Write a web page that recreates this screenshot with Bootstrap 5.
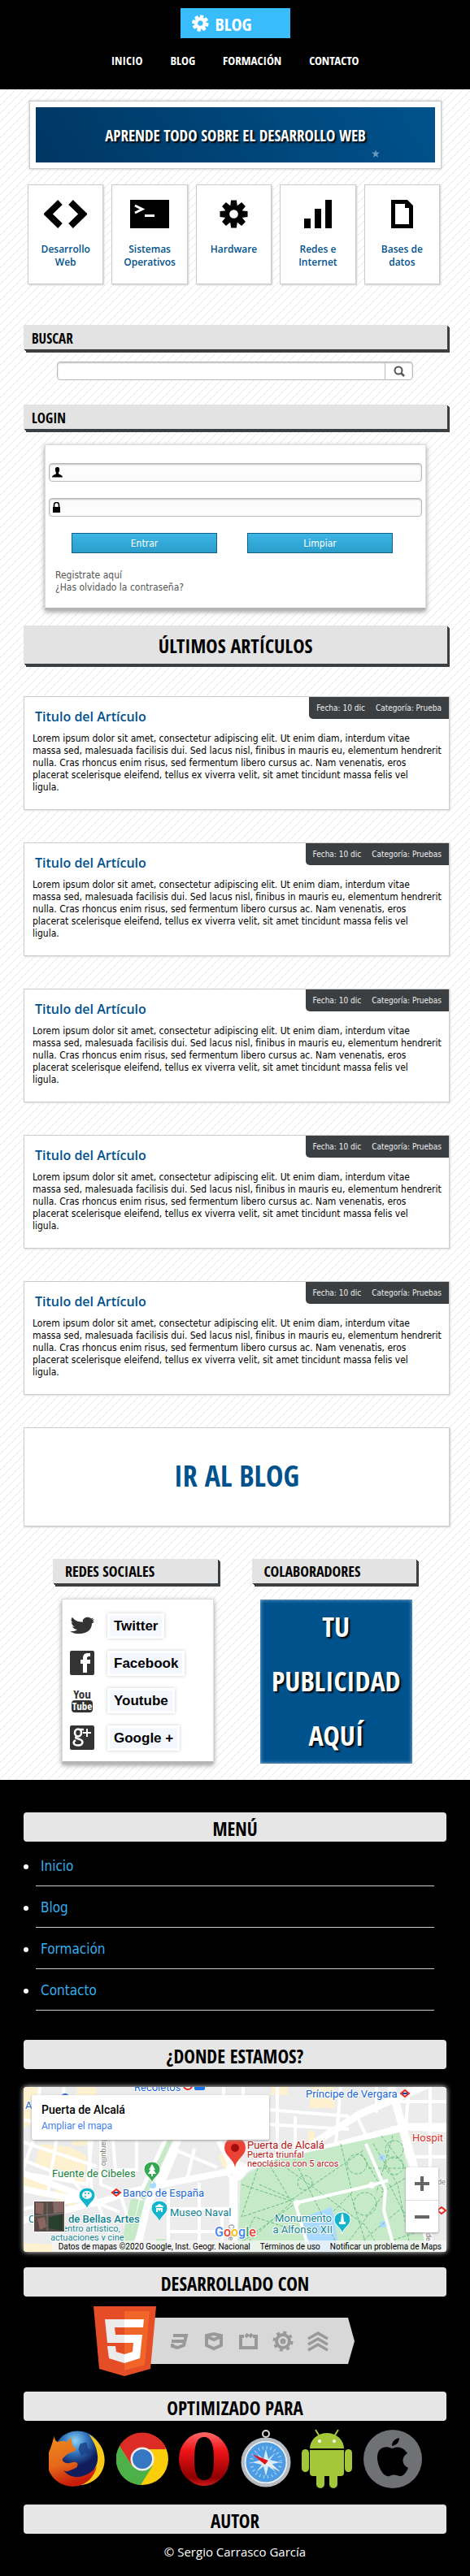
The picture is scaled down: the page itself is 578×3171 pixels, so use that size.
<!DOCTYPE html>
<html lang="es">
<head>
<meta charset="utf-8">
<meta name="viewport" content="width=device-width, initial-scale=1">
<title>Blog</title>
<link href="https://cdn.jsdelivr.net/npm/bootstrap@5.3.0/dist/css/bootstrap.min.css" rel="stylesheet">
<style>
:root{--ink:#3b3f42;--brand:#00528d;--sky:#39bcfc;--line:#ccc}
body{font-family:"DejaVu Sans Condensed","Open Sans",sans-serif;font-size:12px;line-height:15px;color:#000;
 background:#fff linear-gradient(to bottom right,transparent 45%,#e6e6e6 50%,transparent 55%) 0 0/10px 10px}
a{text-decoration:none}
.display-face{font-family:"Open Sans Condensed","Roboto Condensed","Liberation Sans Narrow",sans-serif;text-transform:uppercase;font-weight:700}
.site-head{background:#000;height:110px;padding-top:10px}
.logo{background:var(--sky);color:#fff;width:135px;height:37px;padding-left:14px;font-size:22px;line-height:38px}
.site-nav{gap:34px;margin-top:16px}
.site-nav a{color:#fff;font-size:15px;line-height:22px}
.page{padding:14px 25px 0 29px}
.hero{margin:0 10px 0 7px;padding:7px;background:#fff;border:1px solid var(--line);box-shadow:0 0 3px #bbb}
.hero h1{margin:0;height:68px;line-height:70px;font-size:19px;color:#fff;text-align:center;text-shadow:2px 2px 2px #000;background:linear-gradient(60deg,#003763,#00528d)}
.hero svg{position:absolute;right:74px;bottom:12px}
.topics{margin:19px 12px 50px 5px;gap:10px}
.topic{flex:1 1 0;height:123px;background:#fff;border:1px solid var(--line);box-shadow:1px 1px 2px #ccc;padding-top:18px;color:var(--brand);font:600 12px/16px "Open Sans",sans-serif;text-align:center}
.topic svg{display:block;margin:0 auto 18px}
.bar{background:#e3e3e3 radial-gradient(#c9c9c9 35%,transparent 45%) 0 0/2px 2px;margin:0 3px 0 0;color:#000;box-shadow:1px 1px var(--ink),2px 2px var(--ink),3px 3px var(--ink),3px 4px var(--ink)}
.bar-sm{height:30px;line-height:34px;font-size:17px;padding-left:10px}
.bar-lg{height:47px;line-height:50px;font-size:24px;text-align:center;margin:19px 3px 40px 0}
.field{border:1px solid #bbb;border-radius:4px;background:#fcfcfc;height:23px;box-shadow:inset 0 1px 2px #bbb}
.field input{border:0;background:none;outline:0;min-width:0}
.search{margin:15px 45px 30px 41px;background:#fff}
.search button{width:34px;border:0;border-left:1px solid #bbb;background:none;padding:0}
.panel{background:#fff;border:1px solid #ddd;border-bottom:3px solid #b5b5b5;box-shadow:0 2px 6px #999}
.login{margin:19px 29px 0 26px;padding:22px 4px 17px;height:204px}
.login .field{padding-left:3px}
.login .field+.field{margin-top:20px}
.actions{gap:37px;margin:20px 36px 20px 28px}
.cta{height:25px;padding:0;border:1px solid #0f6188;border-radius:0;background:linear-gradient(#3cb5e5,#2b9dcb);color:#fff;font-size:12px;flex:1}
.login a{color:#555}
.post{background:#fff;border:1px solid var(--line);box-shadow:1px 1px 2px #ddd;height:140px;margin-bottom:40px;padding:14px 5px 0 10px}
.post h3{margin:0 0 10px;padding-left:3px;font:600 16px/20px "Open Sans",sans-serif}
.post h3 a{color:var(--brand)}
.post p{margin:0}
.post-meta{position:absolute;top:0;right:0;background:var(--ink);color:#eee;height:27px;line-height:28px;font-size:10px;padding:0 9px;border-bottom-left-radius:5px;display:flex;gap:13px}
.to-blog{height:122px;background:#fff;border:1px solid var(--line);box-shadow:1px 1px 2px #ccc;color:var(--brand);font-size:36px;line-height:118px}
.duo{margin:40px 38px 0 36px;gap:39px}
.duo section{flex:1 1 0;min-width:0}
.duo .bar-sm{padding-left:15px;line-height:30px;font-size:18px}
.social{margin:19px 8px 0 11px;padding:9px 9px 0;height:203px}
.social a{display:flex;align-items:center;height:46px;gap:16px;color:#000}
.social span{font:700 17px/25px "Liberation Sans",Arial,sans-serif;background:#f5f7ff;border:3px solid #fff;box-shadow:0 0 4px #ccc;padding:0 5px}
.ad{margin:20px 8px 0 10px;height:202px;background:var(--brand);color:#fff;font-size:34px;line-height:67px;text-align:center;text-shadow:2px 2px 2px #000;box-shadow:inset 0 0 5px #9cc3e4}
.site-foot{background:#000;margin-top:20px;padding:40px 29px 20px;color:#fff}
.foot-bar{background:#e6e6e6 radial-gradient(#c9c9c9 35%,transparent 45%) 0 0/2px 2px;border-radius:4px;height:36px;line-height:40px;font-size:23px;color:#000;text-align:center;margin:0}
.foot-menu{margin:4px 15px 36px;padding:0;list-style:none}
.foot-menu li{position:relative;border-bottom:1px solid #ccc;height:51px;line-height:52px;padding-left:6px;font-size:17px}
.foot-menu li::before{content:"";position:absolute;left:-15px;top:24px;width:6px;height:6px;border-radius:50%;background:#fff}
.foot-menu a{color:#35aeeb}
.map{margin:22px 0 19px;height:203px;border-radius:4px;overflow:hidden;box-shadow:0 0 6px #fff;background:#ececec;font-family:Roboto,"Liberation Sans",sans-serif}
.map>svg{display:block}
.map-card{position:absolute;left:10px;top:10px;width:292px;height:55px;background:#fff;border-radius:2px;box-shadow:0 1px 3px #999;padding:10px 12px}
.map-card strong{display:block;font-size:14px;font-weight:500;line-height:16px}
.map-card a{display:block;margin-top:4px;font-size:12px;line-height:16px;color:#427fed}
.map-zoom{position:absolute;right:10px;bottom:24px;width:40px;background:#fff;border-radius:2px;box-shadow:0 1px 3px #999}
.map-zoom button{display:block;width:40px;height:40px;border:0;background:none;padding:0}
.map-zoom button+button{border-top:1px solid #ddd}
.map-legal{position:absolute;right:0;bottom:0;height:14px;line-height:16px;font-size:10px;background:rgba(245,245,245,.75);padding:0 6px 0 8px;gap:12px;color:#000;white-space:nowrap}
.map-legal a{color:#000}
.made{margin:12px 0 19px}
.browsers{margin:10px 30px 19px 31px}
.author{margin:12px 0 0;font:15px/20px "Open Sans",sans-serif}
</style>
</head>
<body>
<svg width="0" height="0" class="position-absolute" aria-hidden="true">
 <symbol id="gear" viewBox="-18 -18 36 36"><g fill="currentColor"><path id="t" d="M-3.500-17.500h7l1 8h-9zM-3.500 17.500h7l1-8h-9z"/><use href="#t" transform="rotate(45)"/><use href="#t" transform="rotate(90)"/><use href="#t" transform="rotate(135)"/></g><circle r="8.500" fill="none" stroke="currentColor" stroke-width="6"/></symbol>
</svg>

<header class="site-head d-flex flex-column align-items-center">
 <a href="#" class="logo display-face d-flex gap-2"><svg width="21" height="21" class="mt-2"><use href="#gear" transform="rotate(12 10 10)"/></svg>Blog</a>
 <nav class="site-nav d-flex display-face"><a href="#">Inicio</a><a href="#">Blog</a><a href="#">Formación</a><a href="#">Contacto</a></nav>
</header>

<main class="page">
 <section class="hero position-relative"><h1 class="display-face">Aprende todo sobre el desarrollo web</h1>
  <svg width="12" height="12" viewBox="0 0 12 12"><path d="M6 1l1 3.500 4 .2-3 2.300 1 4-3-2.300L3 11l1-4L1 4.700l4-.2z" fill="#8fb2d0" opacity=".75"/></svg></section>

 <section class="topics d-flex">
  <a href="#" class="topic"><svg width="53" height="35" viewBox="0 0 53 35"><path d="M20 3L5 17.500 20 32M33 3l15 14.500L33 32" fill="none" stroke="#000" stroke-width="8"/></svg>Desarrollo<br>Web</a>
  <a href="#" class="topic"><svg width="48" height="35" viewBox="0 0 48 35"><path d="M0 0h48v35H0z"/><path d="M6 7l9 4.500L6 16M18 19.500h12" fill="none" stroke="#fff" stroke-width="3"/></svg>Sistemas<br>Operativos</a>
  <a href="#" class="topic"><svg width="35" height="35" class="text-black"><use href="#gear"/></svg>Hardware</a>
  <a href="#" class="topic"><svg width="35" height="35" viewBox="0 0 35 35"><path d="M1 23h8v12H1zM14 11h8v24h-8zM27 0h8v35h-8z"/></svg>Redes e<br>Internet</a>
  <a href="#" class="topic"><svg width="27" height="35" viewBox="0 0 27 35"><path fill-rule="evenodd" d="M0 0h20l7 7v28H0zM5 5v25h17V10h-5V5z"/></svg>Bases de<br>datos</a>
 </section>

 <h2 class="bar bar-sm display-face">Buscar</h2>
 <form class="search field d-flex">
  <input type="search" class="flex-grow-1" aria-label="Buscar">
  <button type="button" aria-label="Buscar"><svg width="14" height="14" viewBox="0 0 14 14" fill="none" stroke="#555"><circle cx="6" cy="6" r="4.500" stroke-width="2"/><path d="M9 9l4 4" stroke-width="2.500"/></svg></button>
 </form>

 <h2 class="bar bar-sm display-face">Login</h2>
 <form class="login panel">
  <div class="field d-flex align-items-center"><svg width="13" height="13" viewBox="0 0 13 13"><path d="M6.500 0C9 0 9.500 2 9 4.500 8.600 6 8 6.500 8 8c0 1 5 1.500 5 4.500H0C0 9.500 5 9 5 8c0-1.500-.6-2-1-3.500C3.500 2 4 0 6.500 0z"/></svg><input type="text" class="flex-grow-1" aria-label="Usuario"></div>
  <div class="field d-flex align-items-center"><svg width="11" height="13" viewBox="0 0 11 13"><path d="M1 6h9v7H1z"/><path d="M2.500 6V3.500a3 3 0 016 0V6" fill="none" stroke="#000" stroke-width="1.600"/></svg><input type="password" class="flex-grow-1" aria-label="Contraseña"></div>
  <div class="actions d-flex"><button type="button" class="btn cta">Entrar</button><button type="button" class="btn cta">Limpiar</button></div>
  <div class="ms-2"><a href="#">Registrate aquí</a><br><a href="#">¿Has olvidado la contraseña?</a></div>
 </form>

 <h2 class="bar bar-lg display-face">Últimos artículos</h2>
 <div id="posts"></div>
 <a href="#" class="to-blog display-face d-block text-center">Ir al blog</a>

 <div class="duo d-flex">
  <section><h2 class="bar bar-sm display-face">Redes sociales</h2>
   <div class="social panel">
    <a href="#"><svg width="30" height="30" viewBox="0 0 30 30"><path fill="#333" d="M30 9l-3 2c0 9-6 15-15 15-5 0-9-1-12-4 4 1 7 0 9-2-3 0-5-2-6-4h3C3 14 2 12 2 9l2 1C1 8 1 5 3 2c3 5 7 7 13 7-1-4 2-7 6-7 2 0 3 1 4 2l3-1-2 3 3-1-2 3z" transform="translate(0 3) scale(1 .85)"/></svg><span>Twitter</span></a>
    <a href="#"><svg width="30" height="30" viewBox="0 0 30 30"><rect width="30" height="30" rx="2" fill="#333"/><path fill="#fff" d="M16 27V16h-3v-5h3V9c0-4 2-6 6-6h3v4h-2c-1 0-2 1-2 2v2h4v5h-4v11z"/></svg><span>Facebook</span></a>
    <a href="#"><svg width="30" height="30" viewBox="0 0 30 30" overflow="visible" font-family="Open Sans Condensed,Roboto Condensed" font-weight="700" text-anchor="middle"><text x="15" y="13" font-size="15" fill="#333">You</text><rect x="2" y="15" width="26" height="15" rx="4" fill="#333"/><text x="15" y="27" font-size="13" fill="#fff">Tube</text></svg><span>Youtube</span></a>
    <a href="#"><svg width="30" height="30" viewBox="0 0 30 30"><rect width="30" height="30" rx="2" fill="#333"/><g fill="none" stroke="#fff"><ellipse cx="10" cy="9" rx="4" ry="4.500" stroke-width="2.600"/><path d="M12 5h5M9 13c-5 3 1 3 4 4.500 4 2 3 7-3 7s-7-4-3-6.500" stroke-width="2.400"/><path d="M21 4v10M16 9h10" stroke-width="2"/></g></svg><span>Google +</span></a>
   </div></section>
  <section><h2 class="bar bar-sm display-face">Colaboradores</h2>
   <div class="ad display-face">Tu<br>publicidad<br>aquí</div></section>
 </div>
</main>

<footer class="site-foot">
 <h2 class="foot-bar display-face">Menú</h2>
 <ul class="foot-menu"><li><a href="#">Inicio</a></li><li><a href="#">Blog</a></li><li><a href="#">Formación</a></li><li><a href="#">Contacto</a></li></ul>

 <h2 class="foot-bar display-face">¿Donde estamos?</h2>
 <div class="map position-relative">
  <svg width="100%" height="203" viewBox="0 0 520 203" preserveAspectRatio="xMidYMid slice">
   <rect width="520" height="203" fill="#ececec"/>
   <g fill="#fef1cf"><path d="M0 0h20l6 40-26 10zM66 0h24l-4 30-24 5zM20 70l40 4-4 30-42-8zM60 75l18 10-4 34-24-8zM0 110l30 12-6 14-24-8zM38 124l26 8v18l-26-12zM252 70h18l-4 26-20 4-6-14zM355 0h28v26h-32zM305 0h20v10h-20zM350 54h8v18h-8zM0 192l40 2v9H0zM60 60h18v12H60z"/></g>
   <g fill="none" stroke="#fff" stroke-width="4"><path d="M0 40l80 20 4 74M0 68l90 30M20 0L14 60-4 110M50 0L38 80 30 130M84 66l-6 54-78-14M0 90l60 24 24 30M95 66v54l24 10M110 66l3 36h26V66M180 75l58 24M200 118l10-42M170 122l20-46M0 150l90-14M78 138l40 16M90 140l16 40M118 130l20 60M178 125v78M178 150h84M216 118v86M244 150v53M178 178h80M246 0v66M270 0v12M300 28l100 8M300 46l100 6M312 0v80M334 36v44M390 0l-6 70M410 36l14 30M450 18h70M452 50l68 4M474 0l-8 100M500 0v120M470 86h50M500 120v83M434 0v32"/></g>
   <g fill="none" stroke="#fff"><path d="M-4 105l90 34M-4 125l94 18M-4 165l100-24 34-12 46-10 72-14 24-8" stroke-width="8"/><path d="M178 60l-34 72-18 71" stroke-width="7"/><path d="M192 60l-40 86-14 60" stroke-width="9"/><path d="M258 110v93" stroke-width="10"/><path d="M262 108l18-12 90-20 100-27h54" stroke-width="9"/><path d="M348 75l66-42L500-4" stroke-width="9"/><path d="M452 0l28 98 16 110" stroke-width="10"/><path d="M240 66l22 44" stroke-width="7"/><circle cx="261" cy="103" r="10" stroke-width="5"/></g>
   <path d="M180 66l-34 72M146 140l-16 63" stroke="#c6e9c8" stroke-width="6"/>
   <path d="M132 138h10l-14 65h-10zM163 187h12v16h-12z" fill="#c6e9c8"/>
   <path d="M278 105l32-16 152-33 10 42 24 105H263l4-88z" fill="#c6e9c8"/>
   <path d="M346 160l32-12 4 12 6 43h-38l-8-26z" fill="#aadaff"/><circle cx="441" cy="87" r="4" fill="#aadaff"/><circle cx="442" cy="169" r="4" fill="#aadaff"/><circle cx="159" cy="121" r="4" fill="#aadaff"/>
   <g fill="none" stroke="#69bd80" stroke-width="1" stroke-dasharray="4 2"><path d="M268 120l60 20 90-62M270 190l66-48 100-22M288 100l-20 60 60-20M300 92l30 50-60 54M290 120l44 20M310 90l110 80 20 33M330 84l60 119M390 70l14 60-24 24M264 200l20-40 60 20M400 125l24 78M400 190l44-60-30-50M440 60l30 40M430 70l30 50 16 80M424 100h46M450 120l30 60-60 20M454 60l-20 70M440 130l40-24M404 200l60-50 20 20"/><circle cx="346" cy="118" r="9"/><circle cx="456" cy="97" r="11"/><circle cx="410" cy="95" r="12"/><circle cx="420" cy="144" r="14"/><circle cx="456" cy="77" r="11"/></g>
   <g fill="none" stroke="#fff" stroke-width="4"><path d="M352 203l-18-60 94-22 20-6M421 70l24 56-2 26 14 51"/><circle cx="336" cy="143" r="3" stroke-width="2"/><circle cx="428" cy="121" r="3" stroke-width="2"/></g>
   <g stroke="#fff" stroke-width="2" paint-order="stroke" font-size="13">
    <text x="136" y="5" fill="#1967d2">Recoletos</text><text x="2" y="27" fill="#1967d2">A</text>
    <text x="347" y="13" fill="#1967d2">Príncipe de Vergara</text><text x="478" y="67" fill="#d93025">Hospit</text>
    <text x="275" y="76" fill="#b31412">Puerta de Alcalá</text><g font-size="11" fill="#b31412"><text x="275" y="87">Puerta triunfal</text><text x="275" y="98">neoclásica con 5 arcos</text></g>
    <text x="35" y="111" fill="#188038">Fuente de Cibeles</text><text x="122" y="135" fill="#1967d2">Banco de España</text>
    <text x="180" y="159" fill="#128391">Museo Naval</text><text x="6" y="167" fill="#128391">C</text><text x="55" y="167" fill="#128391" font-weight="500">de Bellas Artes</text>
    <g font-size="11" fill="#128391"><text x="41" y="178">Centro artístico,</text><text x="33" y="189">actuaciones y cine</text></g>
    <g text-anchor="end" fill="#128391"><text x="379" y="166">Monumento</text><text x="380" y="180">a Alfonso XII</text></g>
    <g font-size="9" fill="#777"><text transform="translate(96 62) rotate(90)">Barquillo</text><text transform="translate(252 169) rotate(90)">Calle</text><text transform="translate(495 180) rotate(90)">de</text><text x="509" y="120">de</text></g>
   </g>
   <path d="M260 99c-1-10-13-14-13-24a13 13 0 0126 0c0 10-12 14-13 24z" fill="#ea4335"/><circle cx="260" cy="75" r="5" fill="#a50e0e"/>
   <path d="M158 119c-1-8-10-10-10-18a10 9 0 0120 0c0 8-9 10-10 18z" fill="#34a853" stroke="#fff"/>
   <path d="M158 95l4 7h-2l3 5h-4v3h-2v-3h-4l3-5h-2z" fill="#fff"/>
   <g fill="#12b5cb" stroke="#fff"><path d="M78 151c-1-8-10-10-10-18a10 9 0 0120 0c0 8-9 10-10 18zM167 167c-1-8-10-10-10-18a10 9 0 0120 0c0 8-9 10-10 18zM392 181c-1-8-10-10-10-18a10 9 0 0120 0c0 8-9 10-10 18z"/></g>
   <g fill="#fff"><ellipse cx="78" cy="133" rx="6" ry="5"/><path d="M162 147l5-3 5 3v1h-10zM163 149h8v5h-8zM391 156h2l1 10h2v3h-8v-3h2z"/></g><g fill="#12b5cb"><circle cx="76" cy="131" r="1"/><circle cx="80" cy="131" r="1"/><circle cx="76" cy="135" r="1"/><path d="M165 154v-3l2 2 2-2v3"/></g>
   <g fill="#fff" stroke="#e8281e" stroke-width="2"><path id="m" d="M109 130l5-4 5 4-5 4z"/><use href="#m" x="355" y="-122"/><use href="#m" x="400" y="22"/></g><path d="M111 129h6v2h-6zM466 7h6v2h-6z" fill="#174ea6"/>
   <circle cx="202" cy="-2" r="5" fill="#fff" stroke="#e8281e" stroke-width="2"/><rect x="210" y="-7" width="13" height="11" rx="2" fill="#1a73e8"/><circle cx="51" cy="14" r="6" fill="#1967d2"/>
   <g transform="translate(12 140)"><rect width="39" height="39" rx="2" fill="#fff"/><path d="M1 1h37v37H1z" fill="#574b46"/><path d="M3 2l10 1-1 14-9-2zM24 1h13v13l-12 1zM5 22l9-2 2 12-8 4z" fill="#8b6561"/><path d="M19 20l17-3v20l-17-3z" fill="#273f2b"/><path d="M2 19l36-4M17 2v35M30 2l-3 14" stroke="#777" fill="none"/></g>
   <g font-size="16" font-weight="500" stroke="#fff" stroke-width="2" paint-order="stroke"><text x="235" y="184"><tspan fill="#4285f4">G</tspan><tspan fill="#ea4335">o</tspan><tspan fill="#fbbc04">o</tspan><tspan fill="#4285f4">g</tspan><tspan fill="#34a853">l</tspan><tspan fill="#ea4335">e</tspan></text></g>
  </svg>
  <div class="map-card"><strong class="text-black">Puerta de Alcalá</strong><a href="#">Ampliar el mapa</a></div>
  <div class="map-zoom"><button type="button" aria-label="Acercar"><svg width="18" height="18"><path d="M9 0v18M0 9h18" stroke="#666" stroke-width="4"/></svg></button><button type="button" aria-label="Alejar"><svg width="18" height="18"><path d="M0 9h18" stroke="#666" stroke-width="4"/></svg></button></div>
  <div class="map-legal d-flex"><span>Datos de mapas ©2020 Google, Inst. Geogr. Nacional</span><a href="#">Términos de uso</a><a href="#">Notificar un problema de Maps</a></div>
 </div>

 <h2 class="foot-bar display-face">Desarrollado con</h2>
 <svg class="made d-block mx-auto" width="348" height="86" viewBox="0 0 348 86" role="img" aria-label="HTML5">
  <path d="M70 14h243l8 29-8 28H70z" fill="#d8d8d8"/>
  <path d="M0 0h77l-7 77-32 9-31-9z" fill="#e44d26"/><path d="M38 6h31l-6 66-25 7z" fill="#f16529"/>
  <path d="M38 16H14l3 29h21V35H27l-1-9h12zM38 59l-10-3-1-7H17l2 15 19 6z" fill="#ebebeb"/><path d="M38 16h24l-1 10H38zM38 35h22l-3 29-19 6V59l10-3 1-11H38z" fill="#fff"/>
  <g fill="none" stroke="#999" stroke-width="4"><path d="M98 36h16l-3 12-8 3-6-2v-3M96 43h16"/><path d="M139 36l9-2 9 2v12l-9 4-9-4zM139 37l9 4 9-4"/><path d="M185 37h-4v14h19V37h-4M187 38l3-4M192 38l3-4"/><circle cx="233" cy="43" r="8"/><circle cx="233" cy="43" r="11" stroke-dasharray="4 4.640" stroke-width="3"/><circle cx="233" cy="43" r="2" stroke-width="3"/><path d="M264 40l12-7 12 7M264 47l12-7 12 7M264 54l12-7 12 7" stroke-width="3.500"/></g>
 </svg>

 <h2 class="foot-bar display-face">Optimizado para</h2>
 <div class="browsers d-flex justify-content-between">
  <svg width="69" height="74" viewBox="5 0 70 74" role="img" aria-label="Firefox"><defs><radialGradient id="fb" cx=".45" cy=".2"><stop offset="0" stop-color="#8fd4f5"/><stop offset=".5" stop-color="#2f74bd"/><stop offset="1" stop-color="#101c5c"/></radialGradient><linearGradient id="fo" x2=".3" y2="1"><stop offset="0" stop-color="#f08a1c"/><stop offset=".6" stop-color="#e4671a"/><stop offset="1" stop-color="#c71c08"/></linearGradient></defs><circle cx="41" cy="33" r="31" fill="url(#fb)"/><path d="M44 18l8-2 2 8 6 2-3 8-6-4-5 3-4-8z" fill="#1a3d85" opacity=".8"/><path d="M55 6c24 14 26 44 6 58-12 8-24 6-30 2 20-2 36-14 35-32-1-12-5-19-11-28z" fill="#fbc918"/><path d="M12 8c0 4 1 6 4 8 4-2 8-2 11 0 3-2 5-4 6-7 1 7 0 12 6 15-1 5-8 4-12 8-3 3-7 5-4 8 6 5 10 0 16 1 3 1 3 6-2 8-7 3-10 5-14 2 12 15 33 8 42-5-4 17-18 27-34 25C9 68-4 46 7 24z" fill="url(#fo)"/></svg>
  <svg width="64" height="74" viewBox="1 0 64 74" role="img" aria-label="Chrome"><circle cx="33" cy="37" r="32" fill="#fccd0b"/><path d="M5 21a32 32 0 0156 0l1 4H33L20 45z" fill="#dd2c25"/><path d="M5 21a32 32 0 0026 48l15-24-13 6-13-6z" fill="#4bb148"/><circle cx="33" cy="37" r="14.500" fill="#eee"/><circle cx="33" cy="37" r="12" fill="#3577c0"/></svg>
  <svg width="62" height="74" viewBox="1 0 62 74" role="img" aria-label="Opera"><defs><linearGradient id="op" x2="0" y2="1"><stop offset="0" stop-color="#ff6a6a"/><stop offset=".35" stop-color="#ee1216"/><stop offset=".85" stop-color="#8c0002"/><stop offset="1" stop-color="#d3191b"/></linearGradient></defs><path fill-rule="evenodd" fill="url(#op)" d="M32 4a31 33 0 010 66 31 33 0 010-66zM32 10c-8 0-12 8-12 27s4 26 12 26 12-7 12-26-4-27-12-27z"/></svg>
  <svg width="62" height="74" viewBox="0 0 62 74" role="img" aria-label="Safari"><circle cx="31" cy="6" r="4" fill="none" stroke="#ddd" stroke-width="2"/><circle cx="31" cy="41" r="28.500" fill="#357fd2" stroke="#b8bcc0" stroke-width="4"/><circle cx="31" cy="41" r="25.500" fill="#4c9de4" stroke="#eee" stroke-width="2"/><circle cx="31" cy="41" r="18" fill="none" stroke="#b6daf7" stroke-width="4" stroke-dasharray="1 4"/><path d="M31 25l3 12 9-8-7 9 12 3-12 3 7 9-9-7-3 12-3-12-9 7 7-9-12-3 12-3-7-9 9 8z" fill="#d9ecfb"/><path d="M14 31l20 8-4 5z" fill="#e0151b"/><path d="M48 52L30 44l4-5z" fill="#eee"/></svg>
  <svg width="62" height="74" viewBox="1 -1 62 74" role="img" aria-label="Android"><g fill="#a4c639"><path d="M11 23a21 19 0 0142 0zM11 25h42v28q0 4-4 4H15q-4 0-4-4z"/><rect x="1" y="24" width="9" height="28" rx="4.500"/><rect x="54" y="24" width="9" height="28" rx="4.500"/><rect x="19" y="50" width="10" height="22" rx="5"/><rect x="35" y="50" width="10" height="22" rx="5"/></g><path d="M18 0l5 8M46 0l-5 8" stroke="#a4c639" stroke-width="2"/><circle cx="23" cy="14" r="2" fill="#fff"/><circle cx="41" cy="14" r="2" fill="#fff"/></svg>
  <svg width="72" height="74" viewBox="0 0 72 74" role="img" aria-label="Apple"><circle cx="36" cy="37" r="36" fill="#707175"/><path d="M54 30c-8 5-7 14 1 18-3 7-7 11-11 10-5-2-8-2-12 0-8 2-15-13-15-23 0-12 10-15 18-11 7-3 14-2 19 6zM35 21c0-6 4-9 9-10 0 6-4 9-9 10z"/></svg>
 </div>

 <h2 class="foot-bar display-face">Autor</h2>
 <p class="author text-center">© Sergio Carrasco García</p>
</footer>

<script src="https://cdn.jsdelivr.net/npm/bootstrap@5.3.0/dist/js/bootstrap.bundle.min.js"></script>
<script>
const body='Lorem ipsum dolor sit amet, consectetur adipiscing elit. Ut enim diam, interdum vitae<br>massa sed, malesuada facilisis dui. Sed lacus nisl, finibus in mauris eu, elementum hendrerit nulla. Cras rhoncus enim risus, sed fermentum libero cursus ac. Nam venenatis, eros<br>placerat scelerisque eleifend, tellus ex viverra velit, sit amet tincidunt massa felis vel<br>ligula.';
document.getElementById('posts').innerHTML=['Prueba','Pruebas','Pruebas','Pruebas','Pruebas'].map(c=>
 `<article class="post position-relative"><div class="post-meta"><span>Fecha: 10 dic</span><span>Categoría: ${c}</span></div><h3><a href="#">Titulo del Artículo</a></h3><p>${body}</p></article>`).join('');
</script>
</body>
</html>
